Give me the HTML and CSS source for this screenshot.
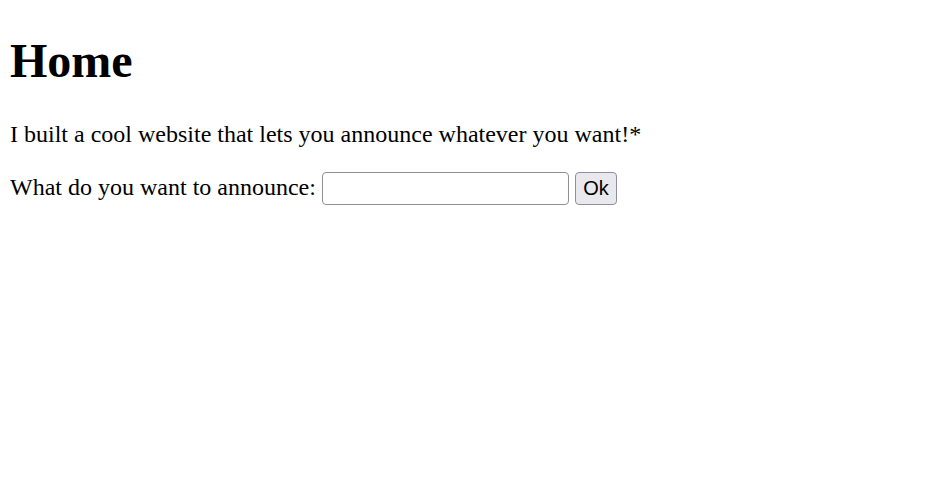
FILE: index.html
```html
<!DOCTYPE html>
<html>
<head>
<meta charset="utf-8">
<link rel="stylesheet" href="styles.css">
</head>
<body class="page">
<h1 class="title">Home</h1>
<p class="intro">I built a cool website that lets you announce whatever you want!*</p>
<form class="announce">
<label class="label" for="msg">What do you want to announce:</label> <input class="field" id="msg" type="text"> <button class="btn" type="button">Ok</button>
</form>
</body>
</html>
```
FILE: styles.css
```css
html, body { background: #fff; }
.page {
  margin: 10px;
  font-family: "Liberation Serif", "Times New Roman", serif;
  font-size: 24px;
  color: #000;
}
.title {
  font-size: 48px;
  font-weight: bold;
  margin: 23px 0 33px;
}
.intro { margin: 24px 0; }
.announce { margin: 24px 0; }
.field {
  box-sizing: border-box;
  width: 247px;
  height: 33px;
  border: 1px solid #8f8f9d;
  border-radius: 4px;
  padding: 2px 4px;
  font-size: 20px;
  font-family: "Liberation Sans", Arial, sans-serif;
  margin: 0;
}
.btn {
  box-sizing: border-box;
  width: 42px;
  height: 33px;
  background: #e9e9ed;
  border: 1px solid #8f8f9d;
  border-radius: 4px;
  padding: 0;
  font-family: "Liberation Sans", Arial, sans-serif;
  font-size: 20px;
  color: #000;
}
```
